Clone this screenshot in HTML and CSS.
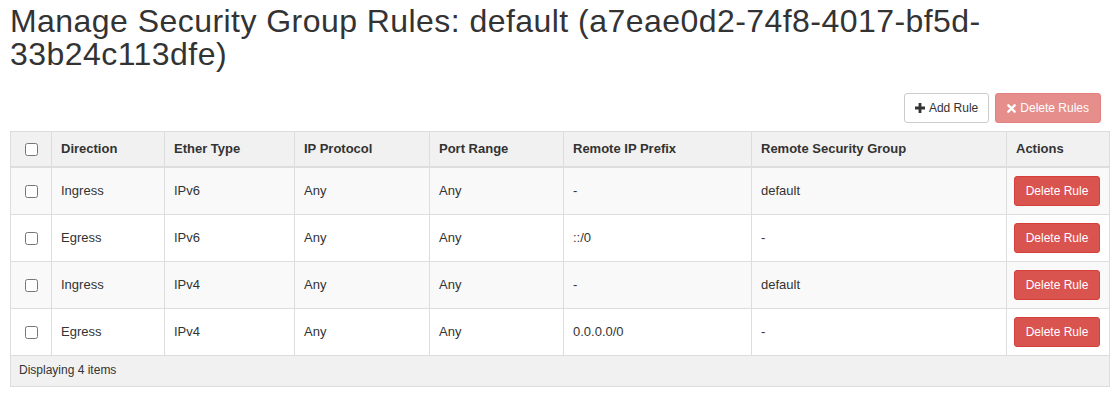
FILE: index.html
```html
<!DOCTYPE html>
<html lang="en">
<head>
  <meta charset="UTF-8" />
  <title>Manage Security Group Rules</title>
  <link rel="stylesheet" href="styles.css">
</head>
<body>
  <h1 class="page-title">Manage Security Group Rules: default (a7eae0d2-74f8-4017-bf5d-33b24c113dfe)</h1>

  <div class="table-actions">
    <button class="btn btn-default">
      <svg class="icon" viewBox="0 0 10 10" width="10" height="10"><path d="M3.6 0h2.8v3.6H10v2.8H6.4V10H3.6V6.4H0V3.6h3.6z" fill="#333"/></svg>
      Add Rule
    </button>
    <button class="btn btn-danger" disabled>
      <svg class="icon" viewBox="0 0 10 10" width="9" height="9"><path d="M1.5 1.5l7 7M8.5 1.5l-7 7" stroke="#fff" stroke-width="2.6" stroke-linecap="round"/></svg>
      Delete Rules
    </button>
  </div>

  <table class="rules-table">
    <colgroup>
      <col style="width:41px">
      <col style="width:113px">
      <col style="width:130px">
      <col style="width:135px">
      <col style="width:134px">
      <col style="width:188px">
      <col style="width:255px">
      <col style="width:103px">
    </colgroup>
    <thead>
      <tr>
        <th class="check-cell"><input type="checkbox"></th>
        <th>Direction</th>
        <th>Ether Type</th>
        <th>IP Protocol</th>
        <th>Port Range</th>
        <th>Remote IP Prefix</th>
        <th>Remote Security Group</th>
        <th>Actions</th>
      </tr>
    </thead>
    <tbody>
      <tr>
        <td class="check-cell"><input type="checkbox"></td>
        <td>Ingress</td>
        <td>IPv6</td>
        <td>Any</td>
        <td>Any</td>
        <td>-</td>
        <td>default</td>
        <td class="action-cell"><button class="btn btn-danger">Delete Rule</button></td>
      </tr>
      <tr>
        <td class="check-cell"><input type="checkbox"></td>
        <td>Egress</td>
        <td>IPv6</td>
        <td>Any</td>
        <td>Any</td>
        <td>::/0</td>
        <td>-</td>
        <td class="action-cell"><button class="btn btn-danger">Delete Rule</button></td>
      </tr>
      <tr>
        <td class="check-cell"><input type="checkbox"></td>
        <td>Ingress</td>
        <td>IPv4</td>
        <td>Any</td>
        <td>Any</td>
        <td>-</td>
        <td>default</td>
        <td class="action-cell"><button class="btn btn-danger">Delete Rule</button></td>
      </tr>
      <tr>
        <td class="check-cell"><input type="checkbox"></td>
        <td>Egress</td>
        <td>IPv4</td>
        <td>Any</td>
        <td>Any</td>
        <td>0.0.0.0/0</td>
        <td>-</td>
        <td class="action-cell"><button class="btn btn-danger">Delete Rule</button></td>
      </tr>
    </tbody>
    <tfoot>
      <tr>
        <td colspan="8">Displaying 4 items</td>
      </tr>
    </tfoot>
  </table>
</body>
</html>
```

FILE: styles.css
```css
body {
  margin: 0;
  padding: 5px 7px 0 10px;
  font-family: 'Liberation Sans', Arial, Helvetica, sans-serif;
  font-size: 13px;
  line-height: 1.42857;
  color: #333;
  background-color: #fff;
}

.page-title {
  margin: 0;
  font-size: 32px;
  font-weight: 500;
  line-height: 33px;
  letter-spacing: 0.45px;
  color: #333;
  width: 1000px;
}

.table-actions {
  display: flex;
  justify-content: flex-end;
  gap: 6px;
  margin: 22px 8px 8px 0;
}

.btn {
  display: inline-flex;
  align-items: center;
  justify-content: center;
  gap: 4px;
  height: 30px;
  padding: 0 10px;
  font-family: inherit;
  font-size: 12px;
  white-space: nowrap;
  border: 1px solid transparent;
  border-radius: 3px;
  cursor: pointer;
}

.btn-default {
  background-color: #fff;
  color: #333;
  border-color: #ccc;
}

.btn-danger {
  background-color: #d9534f;
  color: #fff;
  border-color: #d43f3a;
}

.btn-danger[disabled] {
  opacity: 0.65;
  padding: 0 11px;
  cursor: not-allowed;
}

.icon {
  display: block;
}

.rules-table {
  width: 1099px;
  table-layout: fixed;
  border-collapse: collapse;
  border: 1px solid #ddd;
}

.rules-table th,
.rules-table td {
  padding: 8px 9px;
  border: 1px solid #ddd;
  text-align: left;
  vertical-align: middle;
}

.rules-table th {
  background-color: #f1f1f1;
  font-weight: bold;
  line-height: 18px;
  padding: 8px 9px;
  border-bottom: 2px solid #ddd;
}

.rules-table tbody td {
  height: 30px;
}

.rules-table tbody tr:nth-child(odd) {
  background-color: #f9f9f9;
}

.rules-table .check-cell {
  text-align: center;
  padding: 0;
}

.rules-table .action-cell {
  padding: 8px 7px;
}

.action-cell .btn {
  width: 86px;
}

.check-cell input {
  margin: 0;
  width: 13px;
  height: 13px;
  vertical-align: middle;
}

.rules-table tfoot td {
  background-color: #f1f1f1;
  font-size: 12px;
  padding: 6px 8px;
  height: 18px;
}
```
